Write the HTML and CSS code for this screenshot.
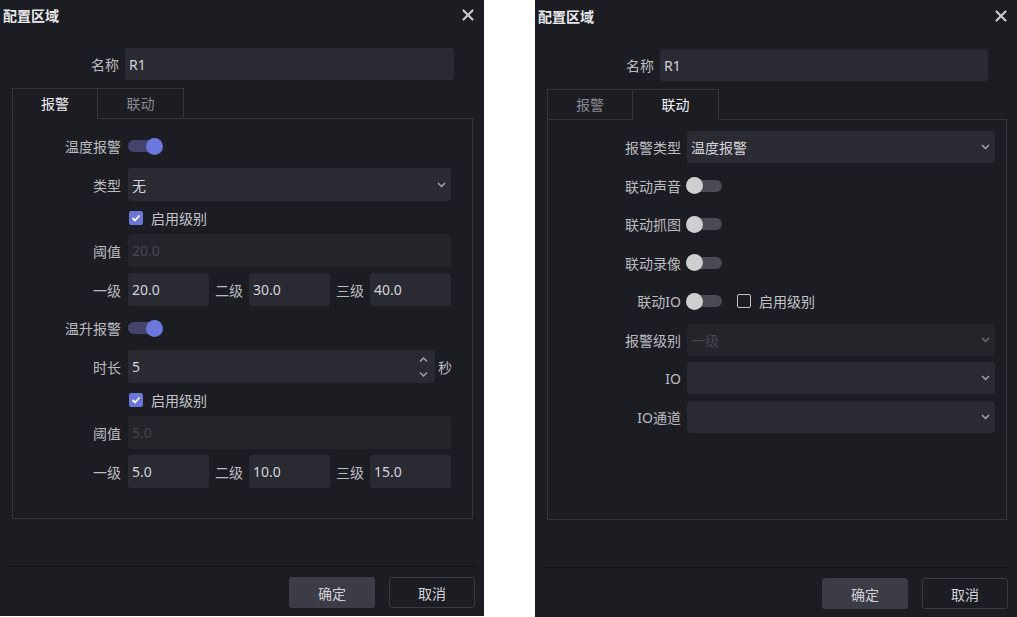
FILE: index.html
```html
<!DOCTYPE html>
<html lang="zh-CN">
<head>
    <meta charset="UTF-8">
    <title>配置区域</title>
    <link rel="stylesheet" href="styles.css">
</head>
<body>
<div class="screen">
    <!-- 报警页 -->
    <div class="dialog">
        <div class="dlg-head">
            <span class="dlg-title">配置区域</span>
            <span class="dlg-close"><svg width="12" height="12" viewBox="0 0 12 12"><path d="M1.5 1.5l9 9M10.5 1.5l-9 9" stroke="#c8c8cc" stroke-width="2.2" stroke-linecap="round"/></svg></span>
        </div>
        <div class="dlg-body">
            <div class="row-name">
                <span class="lbl">名称</span>
                <div class="input">R1</div>
            </div>
            <div class="tabs">
                <div class="tab-bar">
                    <span class="tab active">报警</span>
                    <span class="tab">联动</span>
                </div>
                <div class="tab-panel">
                    <div class="frow sw-row">
                        <span class="lbl">温度报警</span>
                        <span class="toggle on"><span class="knob"></span></span>
                    </div>
                    <div class="frow gap">
                        <span class="lbl">类型</span>
                        <div class="input select">无<svg class="chev" width="9" height="6" viewBox="0 0 9 6"><path d="M1 1l3.5 3.5L8 1" fill="none" stroke="#a4a4ac" stroke-width="1.5"/></svg></div>
                    </div>
                    <div class="frow">
                        <span class="lbl"></span>
                        <span class="check on"><svg width="10" height="8" viewBox="0 0 10 8"><path d="M1.5 4l2.5 2.5L8.5 1.5" fill="none" stroke="#fff" stroke-width="1.8"/></svg></span>
                        <span class="check-text">启用级别</span>
                    </div>
                    <div class="frow">
                        <span class="lbl">阈值</span>
                        <div class="input disabled">20.0</div>
                    </div>
                    <div class="frow gap">
                        <span class="lbl">一级</span>
                        <div class="input">20.0</div>
                        <span class="sub-lbl">二级</span>
                        <div class="input">30.0</div>
                        <span class="sub-lbl">三级</span>
                        <div class="input">40.0</div>
                    </div>
                    <div class="frow sw-row gap">
                        <span class="lbl">温升报警</span>
                        <span class="toggle on"><span class="knob"></span></span>
                    </div>
                    <div class="frow gap">
                        <span class="lbl">时长</span>
                        <div class="input spin">5
                            <svg class="spinner" width="9" height="22" viewBox="0 0 9 22"><path d="M1 5.5L4.5 2L8 5.5M1 16.5L4.5 20L8 16.5" fill="none" stroke="#a4a4ac" stroke-width="1.4"/></svg>
                        </div>
                        <span class="unit">秒</span>
                    </div>
                    <div class="frow">
                        <span class="lbl"></span>
                        <span class="check on"><svg width="10" height="8" viewBox="0 0 10 8"><path d="M1.5 4l2.5 2.5L8.5 1.5" fill="none" stroke="#fff" stroke-width="1.8"/></svg></span>
                        <span class="check-text">启用级别</span>
                    </div>
                    <div class="frow">
                        <span class="lbl">阈值</span>
                        <div class="input disabled">5.0</div>
                    </div>
                    <div class="frow gap">
                        <span class="lbl">一级</span>
                        <div class="input">5.0</div>
                        <span class="sub-lbl">二级</span>
                        <div class="input">10.0</div>
                        <span class="sub-lbl">三级</span>
                        <div class="input">15.0</div>
                    </div>
                </div>
            </div>
        </div>
        <div class="dlg-foot">
            <button class="btn btn-ok">确定</button>
            <button class="btn">取消</button>
        </div>
    </div>

    <!-- 联动页 -->
    <div class="dialog dialog-right">
        <div class="dlg-head">
            <span class="dlg-title">配置区域</span>
            <span class="dlg-close"><svg width="12" height="12" viewBox="0 0 12 12"><path d="M1.5 1.5l9 9M10.5 1.5l-9 9" stroke="#c8c8cc" stroke-width="2.2" stroke-linecap="round"/></svg></span>
        </div>
        <div class="dlg-body">
            <div class="row-name">
                <span class="lbl">名称</span>
                <div class="input">R1</div>
            </div>
            <div class="tabs">
                <div class="tab-bar">
                    <span class="tab">报警</span>
                    <span class="tab active">联动</span>
                </div>
                <div class="tab-panel link-panel">
                    <div class="lrow">
                        <span class="lbl">报警类型</span>
                        <div class="input select">温度报警<svg class="chev" width="9" height="6" viewBox="0 0 9 6"><path d="M1 1l3.5 3.5L8 1" fill="none" stroke="#a4a4ac" stroke-width="1.5"/></svg></div>
                    </div>
                    <div class="lrow">
                        <span class="lbl">联动声音</span>
                        <span class="toggle"><span class="knob"></span></span>
                    </div>
                    <div class="lrow">
                        <span class="lbl">联动抓图</span>
                        <span class="toggle"><span class="knob"></span></span>
                    </div>
                    <div class="lrow">
                        <span class="lbl">联动录像</span>
                        <span class="toggle"><span class="knob"></span></span>
                    </div>
                    <div class="lrow">
                        <span class="lbl">联动IO</span>
                        <span class="toggle"><span class="knob"></span></span>
                        <span class="check io-check"></span>
                        <span class="check-text">启用级别</span>
                    </div>
                    <div class="lrow">
                        <span class="lbl">报警级别</span>
                        <div class="input select disabled">一级<svg class="chev" width="9" height="6" viewBox="0 0 9 6"><path d="M1 1l3.5 3.5L8 1" fill="none" stroke="#6a6a72" stroke-width="1.5"/></svg></div>
                    </div>
                    <div class="lrow">
                        <span class="lbl">IO</span>
                        <div class="input select"><svg class="chev" width="9" height="6" viewBox="0 0 9 6"><path d="M1 1l3.5 3.5L8 1" fill="none" stroke="#a4a4ac" stroke-width="1.5"/></svg></div>
                    </div>
                    <div class="lrow">
                        <span class="lbl">IO通道</span>
                        <div class="input select"><svg class="chev" width="9" height="6" viewBox="0 0 9 6"><path d="M1 1l3.5 3.5L8 1" fill="none" stroke="#a4a4ac" stroke-width="1.5"/></svg></div>
                    </div>
                </div>
            </div>
        </div>
        <div class="dlg-foot">
            <button class="btn btn-ok">确定</button>
            <button class="btn">取消</button>
        </div>
    </div>
</div>
</body>
</html>
```

FILE: styles.css
```css
body {
    margin: 0;
    background: #fff;
    font-family: "Noto Sans", "Noto Sans CJK SC", sans-serif;
    font-size: 14px;
}
.screen {
    display: flex;
    gap: 51px;
    height: 617px;
}
.dialog {
    width: 484px;
    height: 616px;
    background: #1c1c23;
    color: #bcbcc0;
    display: flex;
    flex-direction: column;
}
.dialog-right {
    width: 482px;
    height: 617px;
    padding-top: 1px;
    box-sizing: border-box;
}
.dlg-head {
    height: 29px;
    padding: 0 10px 0 3px;
    display: flex;
    align-items: center;
    justify-content: space-between;
}
.dlg-title {
    font-weight: 700;
    color: #e8e8ec;
}
.dlg-close {
    display: flex;
}
.dlg-body {
    padding: 19px 11px 0 12px;
}
.dialog-right .dlg-body {
    padding-right: 10px;
}
.row-name {
    display: flex;
    height: 32px;
    padding-right: 19px;
}
.lbl {
    flex-shrink: 0;
    width: 107px;
    margin-right: 6px;
    text-align: right;
    align-self: center;
    white-space: nowrap;
}
.input {
    flex: 1;
    min-width: 0;
    height: 100%;
    box-sizing: border-box;
    padding: 0 4px;
    background: #2a2a33;
    border-radius: 3px;
    color: #d4d4d8;
    display: flex;
    align-items: center;
}
.input.disabled {
    background: #24242b;
    color: #46464e;
}
.select .chev,
.spin .spinner {
    margin-left: auto;
}
.select {
    padding-right: 5px;
}
.spin {
    padding-right: 7px;
}
.tabs {
    margin-top: 8px;
}
.tab-bar {
    display: flex;
    height: 30px;
    border-bottom: 1px solid #34343c;
}
.tab {
    width: 86px;
    height: 31px;
    box-sizing: border-box;
    border: 1px solid #34343c;
    line-height: 29px;
    text-align: center;
    color: #8a8a90;
}
.tab + .tab {
    margin-left: -1px;
    width: 87px;
}
.tab.active {
    color: #f2f2f4;
    border-bottom-color: #1c1c23;
}
.tab-panel {
    height: 400px;
    box-sizing: border-box;
    border: 1px solid #34343c;
    border-top: 0;
    padding: 11px 21px 0 0;
}
.frow {
    display: flex;
    align-items: center;
    height: 33px;
}
.frow .lbl {
    width: 108px;
    margin-right: 7px;
}
.frow.gap {
    margin-top: 6px;
}
.frow.sw-row {
    height: 32px;
}
.sub-lbl {
    margin: 0 6px;
    white-space: nowrap;
}
.unit {
    margin-left: 3px;
    margin-right: -1px;
}
.toggle {
    width: 35px;
    height: 12px;
    border-radius: 6px;
    background: #4a4a52;
    display: flex;
    align-items: center;
    flex-shrink: 0;
}
.knob {
    width: 17px;
    height: 17px;
    border-radius: 50%;
    background: #cfcfd2;
    margin-left: -1px;
}
.toggle.on {
    width: 34px;
    background: #43436c;
    justify-content: flex-end;
}
.toggle.on .knob {
    background: #6b77dd;
    margin: 0 -1px 0 0;
}
.check {
    width: 14px;
    height: 14px;
    box-sizing: border-box;
    border-radius: 2px;
    border: 1.5px solid #c4c4c8;
    display: flex;
    align-items: center;
    justify-content: center;
    margin-left: 1px;
}
.check.on {
    background: #6b75d8;
    border-color: #6b75d8;
}
.check-text {
    margin-left: 8px;
    color: #c4c4c8;
}
.link-panel {
    padding: 11px 11px 0 0;
    display: flex;
    flex-direction: column;
    gap: 6.5px;
}
.lrow {
    display: flex;
    align-items: center;
    height: 32px;
}
.lrow .lbl {
    width: 133px;
    margin-right: 6px;
}
.io-check {
    margin-left: 15px;
}
.dlg-foot {
    margin: auto 7px 0 8px;
    border-top: 1px solid #121217;
    padding: 10px 2px 8px 0;
    display: flex;
    justify-content: flex-end;
    gap: 14px;
}
.btn {
    width: 86px;
    height: 31px;
    border-radius: 3px;
    border: 1px solid #3a3a44;
    background: transparent;
    color: #d2d2d6;
    font-family: inherit;
    font-size: 14px;
    outline: none;
}
.btn-ok {
    background: #3c3c47;
    border-color: #3c3c47;
}
```
